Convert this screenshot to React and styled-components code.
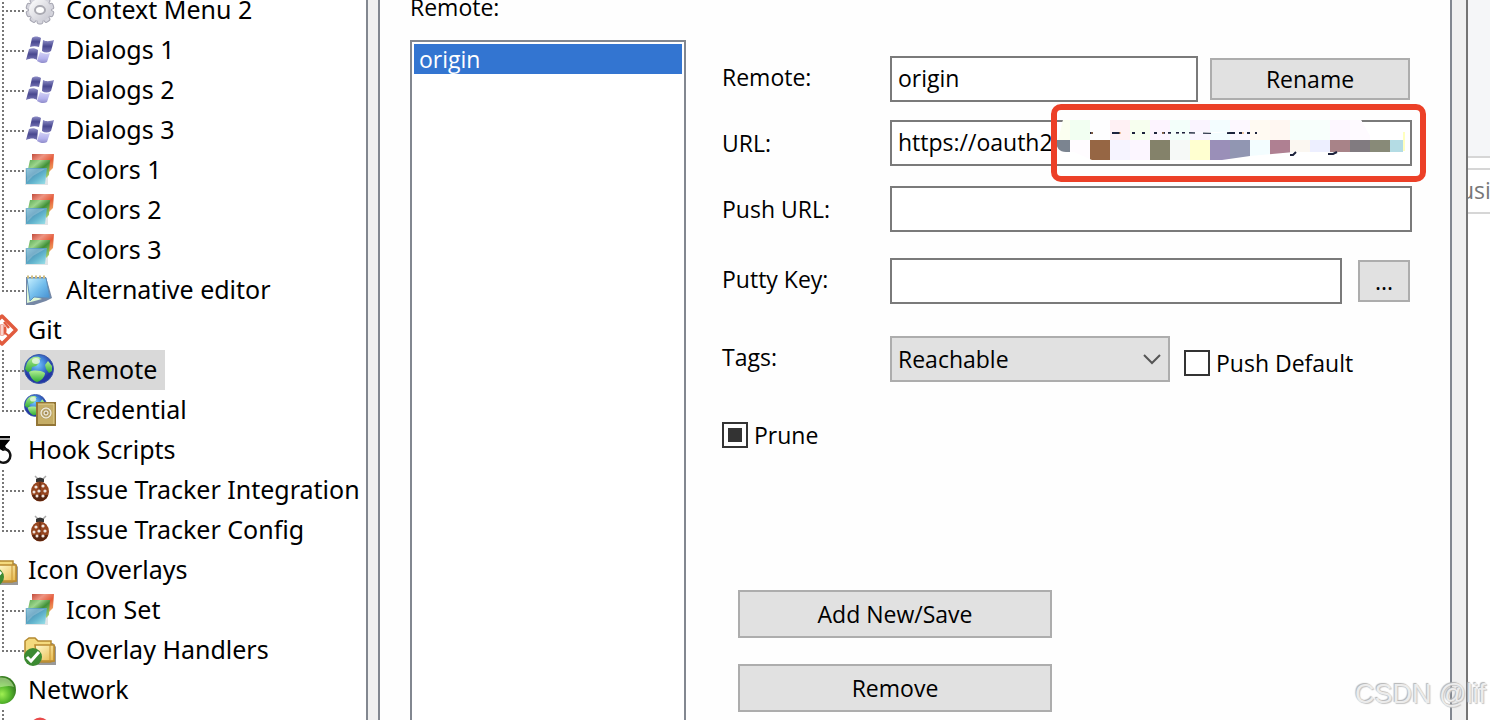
import React, { useEffect, useRef } from "react";
import styled, { createGlobalStyle } from "styled-components";

const GlobalStyle = createGlobalStyle`
  *, *::before, *::after { box-sizing: border-box; }
  body { margin: 0; background: #fff; color: #000; overflow: hidden; }
  button, input, select { font: inherit; color: inherit; margin: 0; border-radius: 0; }
`;

const formFont = `"Open Sans", "Noto Sans", sans-serif`;
const treeFont = `"Noto Sans", "Open Sans", sans-serif`;

const Screen = styled.div`
  display: flex;
  height: 100vh;
  overflow: hidden;
  position: relative;
`;

const TreePane = styled.nav`
  flex: 0 0 366px;
  overflow: hidden;
  background: #fff;
  font: 25px/38px ${treeFont};
`;

const Tree = styled.ul`
  list-style: none;
  margin: -10px 0 0;
  padding: 0;
`;

const TreeRow = styled.li`
  display: flex;
  height: 40px;
  margin-left: ${(p) => (p.$root ? "-18px" : "0")};
`;

const Connector = styled.span`
  flex: 0 0 24px;
  margin-right: -4px;
  position: relative;
  z-index: 1;
  background-repeat: no-repeat;
  background-image: repeating-linear-gradient(180deg, #777 0 2px, transparent 2px 4px),
    repeating-linear-gradient(90deg, #777 0 2px, transparent 2px 4px);
  background-position: 2px 0, 6px 20px;
  background-size: 2px ${(p) => (p.$last ? "22px" : "40px")}, 18px 2px;
`;

const Node = styled.span`
  display: flex;
  align-items: flex-start;
  gap: 10px;
  padding: 0 8px 0 4px;
  white-space: nowrap;
  background: ${(p) => (p.$selected ? "#d9d9d9" : "transparent")};
`;

const Icon = styled.svg`
  flex: none;
  align-self: center;
  width: 32px;
  height: 32px;
`;

const Splitter = styled.div`
  flex: 0 0 ${(p) => p.$width};
  background: #f0f0f0;
  border-left: 2px solid #828790;
  border-right: 2px solid ${(p) => p.$edge || "#828790"};
`;

const Page = styled.main`
  flex: 1;
  min-width: 0;
  display: flex;
  gap: 36px;
  padding: 0 38px 0 30px;
  background: #fefefe;
  font: 23px/30px ${formFont};
`;

const RemoteList = styled.section`
  flex: 0 0 276px;
  display: flex;
  flex-direction: column;
`;

const ListTitle = styled.h2`
  font: inherit;
  margin: -8px 0 18px;
`;

const ListBox = styled.ul`
  flex: 1;
  list-style: none;
  margin: 0 0 -2px;
  padding: 2px;
  background: #fff;
  border: 2px solid #828790;
`;

const ListItem = styled.li`
  height: 30px;
  padding-left: 5px;
  background: #3375d1;
  color: #fff;
`;

const Form = styled.form`
  flex: 1;
  min-width: 0;
  padding-top: 56px;
`;

const Field = styled.div`
  display: grid;
  grid-template-columns: 168px minmax(0, 1fr);
  align-items: center;
  height: 46px;
  margin-bottom: ${(p) => p.$after};
`;

const FieldLabel = styled.label`
  padding-bottom: 4px;
`;

const Controls = styled.div`
  display: flex;
  align-items: center;
  gap: ${(p) => p.$gap || "0"};
  padding-right: ${(p) => p.$inset || "0"};
  position: relative;
`;

const TextBox = styled.input`
  flex: 1;
  min-width: 0;
  height: 46px;
  padding: 0 6px 2px;
  background: #fff;
  border: 2px solid #7a7a7a;
  outline: none;
`;

const Button = styled.button`
  flex: none;
  width: ${(p) => p.$width};
  height: ${(p) => p.$height || "42px"};
  padding: 0;
  background: #e1e1e1;
  border: 2px solid #adadad;
`;

const Highlight = styled.div`
  position: absolute;
  inset: -16px -14px -16px 161px;
  border: 6px solid #ec4027;
  border-radius: 10px;
`;

const Mosaic = styled.svg`
  position: absolute;
  left: 166px;
  top: 0;
  width: 350px;
  height: 42px;
`;

const SelectWrap = styled.div`
  flex: 0 0 280px;
  position: relative;
`;

const Select = styled.select`
  appearance: none;
  display: block;
  width: 100%;
  height: 46px;
  padding: 0 6px;
  background: #e1e1e1;
  border: 2px solid #adadad;
`;

const Chevron = styled.svg`
  position: absolute;
  right: 8px;
  top: 17px;
  width: 20px;
  height: 12px;
  pointer-events: none;
`;

const CheckLabel = styled.label`
  display: flex;
  align-items: center;
  gap: 6px;
  padding-top: ${(p) => p.$drop || "0"};
`;

const CheckBox = styled.input`
  appearance: none;
  width: 26px;
  height: 26px;
  background: #fff;
  border: 2px solid #333;
  &:indeterminate {
    padding: 4px;
    background: #333 content-box;
  }
`;

const Actions = styled.div`
  display: flex;
  flex-direction: column;
  gap: 26px;
  padding: 140px 0 0 16px;
`;

const Behind = styled.aside`
  flex: 0 0 22px;
  overflow: hidden;
  background: #fff;
  font: 23px/40px ${formFont};
  color: #777;
`;

const BehindHeader = styled.div`
  height: 158px;
  margin-bottom: 10px;
  background: #f5f6f8;
  border-bottom: 2px solid #d6d6d6;
`;

const BehindRow = styled.div`
  display: flex;
  height: 46px;
  margin-left: -8px;
  border: solid #d6d6d6;
  border-width: 2px 0;
`;

const Watermark = styled.div`
  position: absolute;
  right: 4px;
  bottom: 10px;
  font: 27px/32px "Liberation Sans", Arial, sans-serif;
  color: #ececec;
  text-shadow: -1px -1px 1px #b4b4b4, 1px 1px 1px #c4c4c4;
`;

function Defs() {
  return (
    <svg width="0" height="0" style={{ position: "absolute" }} aria-hidden="true">
      <defs>
        <linearGradient id="flagDark" x2="0" y2="1"><stop offset="0" stopColor="#9090c8" /><stop offset=".5" stopColor="#49488f" /><stop offset="1" stopColor="#7775b6" /></linearGradient>
        <linearGradient id="flagLight" x2="0" y2="1"><stop offset="0" stopColor="#d3d1f6" /><stop offset=".6" stopColor="#b4b1ec" /><stop offset="1" stopColor="#8e8bca" /></linearGradient>
        <linearGradient id="red" x2="1" y2="1"><stop offset="0" stopColor="#c24c3c" /><stop offset=".3" stopColor="#ee9482" /><stop offset=".6" stopColor="#e45a38" /><stop offset="1" stopColor="#f5bd6f" /></linearGradient>
        <linearGradient id="green" x2="1" y2="1"><stop offset="0" stopColor="#5da952" /><stop offset=".3" stopColor="#9cd58c" /><stop offset=".55" stopColor="#409038" /><stop offset="1" stopColor="#c5df79" /></linearGradient>
        <linearGradient id="blue" x2="1" y2="1"><stop offset="0" stopColor="#78b9d4" /><stop offset=".35" stopColor="#5197b9" /><stop offset=".6" stopColor="#62b4cd" /><stop offset="1" stopColor="#a0e4eb" /></linearGradient>
        <linearGradient id="paper" x2="1" y2="1"><stop offset="0" stopColor="#c8f1ff" /><stop offset=".5" stopColor="#72bdec" /><stop offset="1" stopColor="#3e88cc" /></linearGradient>
        <radialGradient id="ocean" cx=".45" cy=".35"><stop offset="0" stopColor="#75c8ff" /><stop offset=".55" stopColor="#3f80d4" /><stop offset="1" stopColor="#2437a4" /></radialGradient>
        <linearGradient id="land" x2="0" y2="1"><stop offset="0" stopColor="#b1ef93" /><stop offset="1" stopColor="#31ad36" /></linearGradient>
        <linearGradient id="gear" x2="1" y2="1"><stop offset="0" stopColor="#fff" /><stop offset="1" stopColor="#c4c4ce" /></linearGradient>
        <linearGradient id="gold" x2="1" y2="1"><stop offset="0" stopColor="#fffbd0" /><stop offset="1" stopColor="#e8b94a" /></linearGradient>
        <radialGradient id="ball" cx=".5" cy=".65"><stop offset="0" stopColor="#a0f052" /><stop offset=".6" stopColor="#55b62c" /><stop offset="1" stopColor="#397f22" /></radialGradient>
      </defs>
    </svg>
  );
}

const Globe = () => (
  <>
    <circle cx="15" cy="15" r="14.5" fill="url(#ocean)" stroke="#3a59a8" />
    <path d="M3 9C6 3 11 2 15 3l2 2-3 1 1 3-3 3-4 1-1 4-3 1-3-3Z" fill="url(#land)" />
    <path d="M5 18c4-2 11-2 16 1 0 4-4 8-8 9-4-1-7-5-8-10Z" fill="url(#land)" />
    <path d="m24 7 4 5v5l-3 2-3-4-1-4Z" fill="url(#land)" />
    <ellipse cx="12" cy="7" rx="4" ry="3" fill="#fff" opacity=".65" />
  </>
);

const teeth = [0, 36, 72, 108, 144, 180, 216, 252, 288, 324];

const icons = {
  gear: (
    <>
      <g fill="#d4d4dc" stroke="#a4a4b0">
        {teeth.map((a) => <rect key={a} x="13" y="2" width="6" height="7" rx="2" transform={`rotate(${a} 16 16)`} />)}
      </g>
      <circle cx="16" cy="16" r="11" fill="url(#gear)" />
      <ellipse cx="16" cy="16" rx="5" ry="4" fill="#fff" stroke="#aaaab2" strokeWidth="2" />
    </>
  ),
  windows: (
    <>
      <path d="M8 4c2-2 6-2 9 0l-2 9c-3-1-6-1-9 0Z" fill="url(#flagDark)" />
      <path d="M19 6c4 2 7 1 11 0l-3 11c-3 2-6 2-9 0Z" fill="url(#flagDark)" />
      <path d="M5 15c3-1 6-1 9 1l-1 10c-3-2-6-2-11 0Z" fill="url(#flagDark)" />
      <path d="M16 18c4 2 7 2 10 1l-3 9c-3 2-7 1-10-1Z" fill="url(#flagLight)" />
    </>
  ),
  colors: (
    <>
      <path d="M1 14h23v17H1Z" fill="#c9ced2" opacity=".55" />
      <path d="M8 0h22l-1 14-4 4-1-10H8Z" fill="url(#red)" />
      <path d="M6 6h20l-1 15-3 3v-9H4Z" fill="url(#green)" />
      <path d="M2 14h21l-2 16H2Z" fill="url(#blue)" />
      <path d="M3 15h18L9 22l-6 6Z" fill="#fff" opacity=".22" />
    </>
  ),
  notepad: (
    <>
      <path d="M2 3h20l6 21-6 3-12 4H2Z" fill="#7688a5" />
      <path d="M3 5v24l15-4-12-4Z" fill="#def7d5" />
      <path d="M3 4h19l4 20-16-1-4 4Z" fill="url(#paper)" stroke="#5f91bd" />
      <path d="M3 3h18" stroke="#d1bd80" strokeWidth="3" strokeDasharray="2 2" />
    </>
  ),
  git: (
    <>
      <path d="M16 2 30 16 16 30 2 16Z" fill="#fff" stroke="#e15b3e" strokeWidth="3.5" strokeLinejoin="round" />
      <path d="m18 8 5 6" stroke="#e15b3e" strokeWidth="2.5" fill="none" />
      <ellipse cx="16" cy="16" rx="5" ry="6" fill="#efa294" />
      <path d="M16 11v10" stroke="#f8d5ce" strokeWidth="2" />
      <path d="M19 13v6l4 3" stroke="#e15b3e" strokeWidth="2" fill="none" />
    </>
  ),
  globe: <Globe />,
  credential: (
    <>
      <g transform="scale(.76)"><Globe /></g>
      <rect x="13" y="9" width="18" height="22" fill="#c5ad66" stroke="#927536" strokeWidth="2" />
      <path d="M14 10h16v20" fill="none" stroke="#e6d491" />
      <circle cx="22" cy="19" r="6" fill="#9c8245" />
      <circle cx="22" cy="19" r="5" fill="#b7a26b" stroke="#eee9d6" strokeWidth="1.5" />
      <circle cx="22" cy="19" r="2" fill="#a08850" stroke="#fff" />
    </>
  ),
  hook: (
    <>
      <path d="M6 2h18v2H6Z" fill="#000" />
      <path d="M6 4h18v2H6Z" fill="#aaa" />
      <path d="M8 6h16l-5 6 2 3-4 2-5-3Z" fill="#000" />
      <path d="M17 15c8 0 9 8 5 12-3 3-9 2-11-2" fill="none" stroke="#111" strokeWidth="2.5" />
    </>
  ),
  bug: (
    <>
      <path d="m11 2 3 3m8-3-3 3" stroke="#aaa" strokeWidth="1.5" />
      <path d="M12 8V5q4-3 8 0v3Z" fill="#333" />
      <ellipse cx="16" cy="17.5" rx="9" ry="10" fill="#95451f" />
      <path d="M8 21c2 8 14 8 16 0Z" fill="#58250f" />
      <path d="M16 8v19" stroke="#5e260e" />
      <g fill="#efe5df"><circle cx="12" cy="13" r="1.6" /><circle cx="19" cy="12" r="1.6" /><circle cx="10" cy="18" r="1.5" /><circle cx="15" cy="17" r="1.6" /><circle cx="21" cy="17" r="1.6" /><circle cx="13" cy="22" r="1.5" /><circle cx="19" cy="22" r="1.6" /></g>
    </>
  ),
  folder: (
    <>
      <path d="M3 9h26l3 4v18H6Z" fill="#777" opacity=".75" />
      <path d="M1 22V7l4-3h6l3 3h13v4l3 1v15l-4 1H8Z" fill="#f4da7e" stroke="#b48930" strokeWidth="1.5" />
      <path d="M11 11h19v16H13Z" fill="url(#gold)" stroke="#ba8b30" strokeWidth="1.5" />
      <path d="M26 11v16" stroke="#c59435" />
      <circle cx="9" cy="23" r="9" fill="#3c8a32" />
      <path d="m3 23 4 4 8-9" fill="none" stroke="#fff" strokeWidth="3" />
    </>
  ),
  network: (
    <>
      <circle cx="16" cy="16" r="14" fill="url(#ball)" />
      <path d="M4 12C6 1 24 0 28 13c-8-3-16 3-24-1Z" fill="#d3f6b3" opacity=".55" />
    </>
  ),
  email: <circle cx="16" cy="13" r="9.5" fill="#e84b4b" />,
};

const rows = [
  ["gear", "Context Menu 2"],
  ["windows", "Dialogs 1"],
  ["windows", "Dialogs 2"],
  ["windows", "Dialogs 3"],
  ["colors", "Colors 1"],
  ["colors", "Colors 2"],
  ["colors", "Colors 3"],
  ["notepad", "Alternative editor", "last"],
  ["git", "Git", "root"],
  ["globe", "Remote"],
  ["credential", "Credential", "last"],
  ["hook", "Hook Scripts", "root"],
  ["bug", "Issue Tracker Integration"],
  ["bug", "Issue Tracker Config", "last"],
  ["folder", "Icon Overlays", "root"],
  ["colors", "Icon Set"],
  ["folder", "Overlay Handlers", "last"],
  ["network", "Network", "root"],
  ["email", "Email"],
];

function SettingsTree() {
  return (
    <TreePane>
      <Tree>
        {rows.map(([icon, label, kind]) => (
          <TreeRow key={label} $root={kind === "root"}>
            {kind !== "root" && <Connector $last={kind === "last"} />}
            <Node $selected={label === "Remote"}>
              <Icon viewBox="0 0 32 32" aria-hidden="true">{icons[icon]}</Icon>
              {label}
            </Node>
          </TreeRow>
        ))}
      </Tree>
    </TreePane>
  );
}

const paleTiles = ["#fbfff0", "#f2fff2", "#fefeff", "#fff1f4", "#f7ffef", "#fdf4ff", "#f3fffa", "#faf4ff", "#f3fdff", "#fdf8ff", "#fffaf2", "#fff7f2", "#f7fffb", "#f8fffc", "#fdf7ff", "#fefaff"];
const darkTiles = ["#7b8490", "#fffcff", "#966644", "#f6f4ff", "#fcf6ff", "#84826a", "#f6f9f7", "#ffffd0", "#9a8fb8", "#9196b2", "#f3fdff", "#af8092", "#fbf7f1", "#edefff", "#a88388", "#817b80", "#888a78", "#b4dce4"];

function Redaction() {
  return (
    <Mosaic viewBox="0 0 350 42" aria-hidden="true">
      <defs>
        <clipPath id="top"><path d="M7 0H305L313 14 318 20H2Z" /></clipPath>
        <clipPath id="bottom"><path d="M0 20H347V32H276L238 32 216 34 194 36 166 40H36L18 32H10Q0 32 0 20Z" /></clipPath>
      </defs>
      <path d="M7 0H305L313 14H349V36H200L170 40H36L2 32Z" fill="#fff" />
      <g clipPath="url(#top)">
        {paleTiles.map((c, i) => <rect key={i} x={i * 20 - 6} y="0" width="20" height="20" fill={c} />)}
      </g>
      <g clipPath="url(#bottom)">
        {darkTiles.map((c, i) => <rect key={i} x={i * 20 - 6} y="20" width="20" height="20" fill={c} />)}
      </g>
      <path d="M34 13h3M56 13h8M76 13h3M86 13h3M98 13h3M106 13h3M112 13h3M120 13h3M126 13h3M133 13h6M147 13h8M171 13h8M183 13h3M191 13h3M199 13h2" stroke="#1d233c" strokeWidth="2" />
      <path d="M36 12v2M64 12v2M107 12v2M187 12v2" stroke="#d9914a" strokeWidth="1" />
      <path d="M100 14 160 13 215 9 190 11 130 13Z" fill="#fff" />
      <path d="M234 35h3l3-3M272 34h5l4-2" fill="none" stroke="#1d233c" strokeWidth="2" />
      <path d="M348 12v19" stroke="#ffffbe" strokeWidth="2" />
    </Mosaic>
  );
}

export default function App() {
  const prune = useRef(null);
  useEffect(() => {
    prune.current.indeterminate = true;
  }, []);

  return (
    <Screen>
      <GlobalStyle />
      <Defs />
      <SettingsTree />
      <Splitter $width="14px" />
      <Page>
        <RemoteList>
          <ListTitle id="remotes">Remote:</ListTitle>
          <ListBox role="listbox" aria-labelledby="remotes">
            <ListItem role="option" aria-selected="true">origin</ListItem>
          </ListBox>
        </RemoteList>
        <Form onSubmit={(e) => e.preventDefault()}>
          <Field $after="18px">
            <FieldLabel htmlFor="name">Remote:</FieldLabel>
            <Controls $gap="12px" $inset="2px">
              <TextBox id="name" defaultValue="origin" />
              <Button type="button" $width="200px">Rename</Button>
            </Controls>
          </Field>
          <Field $after="20px">
            <label htmlFor="url">URL:</label>
            <Controls>
              <TextBox id="url" defaultValue="https://oauth2" />
              <Redaction />
              <Highlight />
            </Controls>
          </Field>
          <Field $after="26px">
            <label htmlFor="push">Push URL:</label>
            <Controls>
              <TextBox id="push" />
            </Controls>
          </Field>
          <Field $after="32px">
            <FieldLabel htmlFor="putty">Putty Key:</FieldLabel>
            <Controls $gap="16px" $inset="2px">
              <TextBox id="putty" />
              <Button type="button" $width="52px">...</Button>
            </Controls>
          </Field>
          <Field $after="38px">
            <FieldLabel htmlFor="tags">Tags:</FieldLabel>
            <Controls $gap="14px">
              <SelectWrap>
                <Select id="tags" defaultValue="Reachable">
                  <option>Reachable</option>
                </Select>
                <Chevron viewBox="0 0 20 12" aria-hidden="true">
                  <path d="m2 2 8 8 8-8" fill="none" stroke="#555" strokeWidth="2" />
                </Chevron>
              </SelectWrap>
              <CheckLabel $drop="8px">
                <CheckBox type="checkbox" />
                Push Default
              </CheckLabel>
            </Controls>
          </Field>
          <CheckLabel>
            <CheckBox type="checkbox" ref={prune} />
            Prune
          </CheckLabel>
          <Actions>
            <Button type="button" $width="314px" $height="48px">Add New/Save</Button>
            <Button type="button" $width="314px" $height="48px">Remove</Button>
          </Actions>
        </Form>
      </Page>
      <Splitter $width="18px" $edge="#747474" />
      <Behind>
        <BehindHeader />
        <BehindRow>usi</BehindRow>
      </Behind>
      <Watermark>CSDN @lif</Watermark>
    </Screen>
  );
}
